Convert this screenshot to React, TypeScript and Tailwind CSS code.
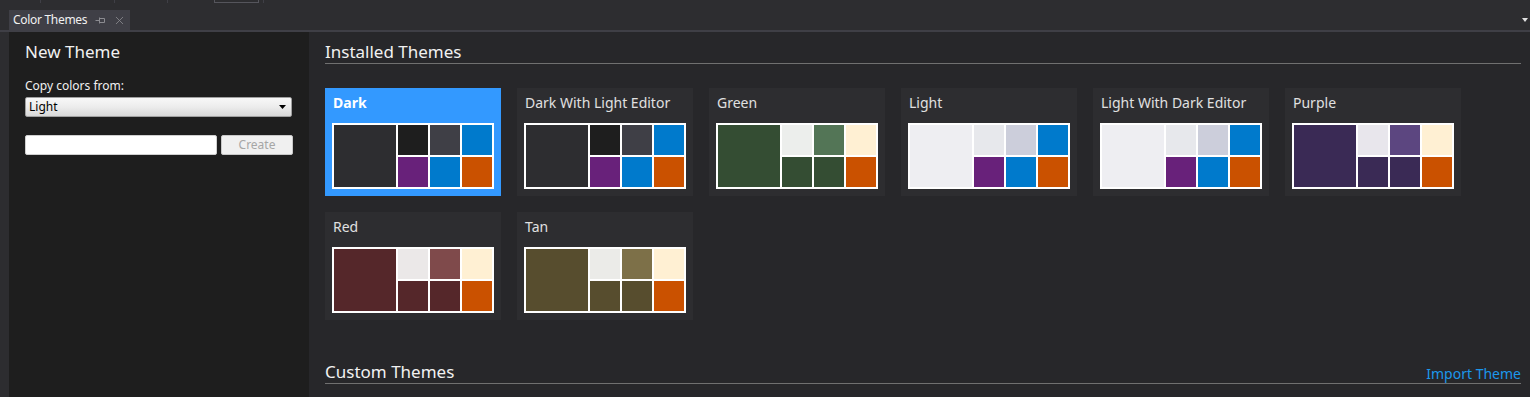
import { X } from 'lucide-react';

type Theme = {
  name: string;
  big: string;
  top: [string, string, string];
  bottom: [string, string, string];
  selected?: boolean;
};

const BLUE = '#007acc';
const PURPLE = '#68217a';
const ORANGE = '#ca5100';

const themes: Theme[] = [
  { name: 'Dark', big: '#2d2d30', top: ['#1e1e1e', '#3f3f46', BLUE], bottom: [PURPLE, BLUE, ORANGE], selected: true },
  { name: 'Dark With Light Editor', big: '#2d2d30', top: ['#1e1e1e', '#3f3f46', BLUE], bottom: [PURPLE, BLUE, ORANGE] },
  { name: 'Green', big: '#344d33', top: ['#eceeec', '#537556', '#fff0d3'], bottom: ['#344d33', '#344d33', ORANGE] },
  { name: 'Light', big: '#eeeef2', top: ['#e7e8ec', '#cccedb', BLUE], bottom: [PURPLE, BLUE, ORANGE] },
  { name: 'Light With Dark Editor', big: '#eeeef2', top: ['#e7e8ec', '#cccedb', BLUE], bottom: [PURPLE, BLUE, ORANGE] },
  { name: 'Purple', big: '#3a2a55', top: ['#e8e6ec', '#5c4680', '#fff0d3'], bottom: ['#3a2a55', '#3a2a55', ORANGE] },
  { name: 'Red', big: '#55272a', top: ['#ebe8e8', '#7f4a4b', '#fff0d3'], bottom: ['#55272a', '#55272a', ORANGE] },
  { name: 'Tan', big: '#574d2e', top: ['#ebebe8', '#7d7048', '#fff0d3'], bottom: ['#574d2e', '#574d2e', ORANGE] },
];

const font = { fontFamily: '"Noto Sans", "Segoe UI", sans-serif' };

function Swatch({ t }: { t: Theme }) {
  return (
    <div className="grid grid-cols-[62px_30px_30px_30px] grid-rows-[30px_30px] gap-[2px] p-[2px] bg-white w-[162px]">
      <div className="row-span-2" style={{ background: t.big }} />
      {t.top.map((c, i) => <div key={'t' + i} style={{ background: c }} />)}
      {t.bottom.map((c, i) => <div key={'b' + i} style={{ background: c }} />)}
    </div>
  );
}

function ThemeCard({ t }: { t: Theme }) {
  return (
    <div className={`w-[176px] h-[108px] pt-[5px] px-[7px] ${t.selected ? 'bg-[#3399ff]' : 'bg-[#2d2d30]'}`}>
      <div className={`h-[20px] leading-[20px] text-[14px] pl-[1px] mb-[10px] whitespace-nowrap ${t.selected ? 'text-white font-bold' : 'text-[#e0e0e0]'}`}>
        {t.name}
      </div>
      <Swatch t={t} />
    </div>
  );
}

export default function App() {
  return (
    <div className="w-[1530px] h-[397px] bg-[#2d2d30] overflow-hidden flex flex-col" style={font}>
      {/* top strip with fragments of the tab well above */}
      <div className="h-[10px] relative">
        <div className="absolute left-[40px] top-0 w-px h-[3px] bg-[#3f3f46]" />
        <div className="absolute left-[114px] top-0 w-px h-[3px] bg-[#3f3f46]" />
        <div className="absolute left-[167px] top-0 w-px h-[3px] bg-[#3f3f46]" />
        <div className="absolute left-[214px] top-0 w-[45px] h-[3px] border-x border-b border-[#55555c]" />
        <div className="absolute left-[263px] top-0 w-px h-[3px] bg-[#3f3f46]" />
      </div>

      {/* tab row */}
      <div className="h-[20px] flex items-stretch justify-between">
        <div className="ml-[9px] w-[121px] bg-[#3f3f46] flex items-center pl-[4px] whitespace-nowrap">
          <span className="text-[12px] text-[#f1f1f1] leading-none tracking-[-0.3px]">Color Themes</span>
          <svg width="11" height="9" viewBox="0 0 11 9" className="shrink-0 ml-[8px]">
            <path d="M0.5 4.5h4M4.5 1.5v6M4.5 2.5h5v4h-5" stroke="#8b8b90" strokeWidth="1" fill="none" />
          </svg>
          <X className="shrink-0 w-[13px] h-[13px] text-[#8b8b90] ml-[7px]" strokeWidth={1.5} />
        </div>
        <div className="flex items-center pr-[2px]">
          <svg width="6" height="4" viewBox="0 0 6 4"><path d="M0 0h6L3 4z" fill="#e0e0e0" /></svg>
        </div>
      </div>
      <div className="h-[2px] bg-[#3f3f46]" />

      {/* body */}
      <div className="flex-1 flex">
        <div className="ml-[9px] w-[300px] bg-[#1e1e1e] pl-[16px] pt-[8px]">
          <div className="h-[23px] leading-[23px] text-[17px] text-[#f1f1f1]">New Theme</div>
          <div className="mt-[15px] h-[16px] leading-[16px] text-[12px] text-[#f1f1f1]">Copy colors from:</div>
          <div className="mt-[3px] w-[267px] h-[20px] rounded-[2px] border border-[#a0a0a0] bg-gradient-to-b from-[#f8f8f8] via-[#ececec] to-[#d8d8d8] flex items-center justify-between pl-[3px] pr-[5px]">
            <span className="text-[12px] text-black leading-none">Light</span>
            <svg width="7" height="4" viewBox="0 0 7 4"><path d="M0 0h7L3.5 4z" fill="#000" /></svg>
          </div>
          <div className="mt-[18px] flex gap-[4px]">
            <div className="w-[192px] h-[20px] bg-white rounded-[2px] border border-[#d0d0d0]" />
            <div className="w-[72px] h-[20px] rounded-[2px] border border-[#c8c8c8] bg-[#f0f0f0] flex items-center justify-center text-[12px] text-[#a6a6a6] leading-none">
              Create
            </div>
          </div>
        </div>

        <div className="flex-1 bg-[#27272a] pl-[16px] pr-[9px] pt-[8px]">
          <div className="h-[24px] leading-[23px] text-[17px] text-[#f1f1f1] border-b border-[#707070]">Installed Themes</div>
          <div className="mt-[24px] flex flex-wrap gap-[16px] w-[1152px]">
            {themes.map(t => <ThemeCard key={t.name} t={t} />)}
          </div>
          <div className="mt-[40px] h-[24px] flex items-end justify-between border-b border-[#707070]">
            <span className="leading-[22px] text-[17px] text-[#f1f1f1]">Custom Themes</span>
            <span className="leading-[18px] text-[14px] text-[#1c97ea]">Import Theme</span>
          </div>
        </div>
      </div>
    </div>
  );
}
